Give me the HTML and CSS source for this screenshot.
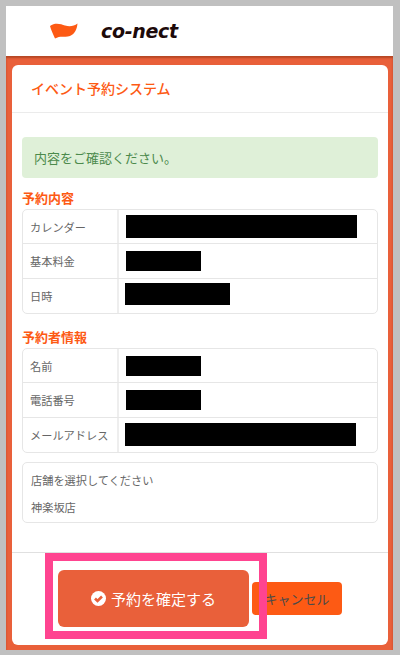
FILE: index.html
```html
<!DOCTYPE html>
<html lang="ja">
  <head>
    <meta charset="UTF-8" />
    <meta name="viewport" content="width=device-width, initial-scale=1.0" />
    <title>イベント予約システム</title>
    <link rel="stylesheet" href="styles.css">
  </head>
  <body>
    <div class="phone">
      <header class="site-header">
        <svg class="logo-flag" width="28" height="16" viewBox="0 0 28 16">
          <path d="M0 3C5 -1 11 1 15 2.500C20 4 24 3 27.500 0.500C27 6 25 11 20 13C15 15 11 12 5 15.500C3 11 1 7 0 3Z" fill="#fd5a14" />
        </svg>
        <span class="logo-text">co-nect</span>
      </header>
      <main class="page">
        <section class="card">
          <h1 class="card-title">イベント予約システム</h1>
          <div class="card-body">
            <div class="alert">内容をご確認ください。</div>

            <h2 class="section-title">予約内容</h2>
            <div class="info-table">
              <div class="info-row">
                <div class="info-label">カレンダー</div>
                <div class="info-value"><span class="redact redact-long"></span></div>
              </div>
              <div class="info-row">
                <div class="info-label">基本料金</div>
                <div class="info-value"><span class="redact redact-short"></span></div>
              </div>
              <div class="info-row">
                <div class="info-label">日時</div>
                <div class="info-value"><span class="redact redact-mid"></span></div>
              </div>
            </div>

            <h2 class="section-title section-title-second">予約者情報</h2>
            <div class="info-table">
              <div class="info-row">
                <div class="info-label">名前</div>
                <div class="info-value"><span class="redact redact-short"></span></div>
              </div>
              <div class="info-row">
                <div class="info-label">電話番号</div>
                <div class="info-value"><span class="redact redact-short"></span></div>
              </div>
              <div class="info-row">
                <div class="info-label">メールアドレス</div>
                <div class="info-value"><span class="redact redact-long redact-email"></span></div>
              </div>
            </div>

            <div class="shop-box">
              <div class="shop-line">店舗を選択してください</div>
              <div class="shop-line">神楽坂店</div>
            </div>
          </div>
          <div class="card-footer">
            <button class="btn-confirm" type="button">
              <svg width="15" height="15" viewBox="0 0 15 15">
                <circle cx="7.500" cy="7.500" r="7.500" fill="#fff" />
                <path d="M4 7.500L6.500 10L11 5.500" fill="none" stroke="#e9603a" stroke-width="2.600" />
              </svg>
              予約を確定する
            </button>
            <button class="btn-cancel" type="button">キャンセル</button>
            <div class="highlight"></div>
          </div>
        </section>
      </main>
    </div>
  </body>
</html>
```

FILE: styles.css
```css
* {
  box-sizing: border-box;
}
body {
  margin: 0;
  height: 655px;
  padding: 6px 7px 5px 6px;
  background: #c0c0c0;
  font-family: "Noto Sans CJK JP", "Noto Sans", sans-serif;
  overflow: hidden;
}
.phone {
  height: 644px;
  display: flex;
  flex-direction: column;
}
.site-header {
  height: 50px;
  flex: none;
  background: #fff;
  display: flex;
  align-items: center;
  padding: 0 0 1px 44px;
}
.logo-flag {
  flex: none;
}
.logo-text {
  margin-left: 23px;
  font-family: "DejaVu Sans", sans-serif;
  font-size: 19px;
  font-weight: 700;
  font-style: italic;
  letter-spacing: -0.3px;
  color: #1d0a0a;
}
.page {
  flex: 1;
  padding: 9px 5px 5px 6px;
  background: #e9603a;
  box-shadow: inset 0 2px 2px rgba(120, 40, 10, 0.45);
  display: flex;
}
.card {
  flex: 1;
  background: #fff;
  border-radius: 6px;
  display: flex;
  flex-direction: column;
}
.card-title {
  margin: 0;
  height: 48px;
  padding: 0 19px;
  border-bottom: 1px solid #ebebeb;
  font-size: 14px;
  font-weight: 500;
  line-height: 47px;
  color: #fd5a14;
}
.card-body {
  flex: 1;
  padding: 24px 10px 0;
}
.alert {
  height: 41px;
  padding: 0 12px;
  border-radius: 4px;
  background: #dff0d8;
  color: #4c8a4c;
  font-size: 13px;
  line-height: 41px;
}
.section-title {
  margin: 11px 0 3px;
  height: 17px;
  font-size: 13px;
  font-weight: 700;
  line-height: 17px;
  color: #fd5a14;
}
.section-title-second {
  margin-top: 14px;
}
.info-table {
  border: 1px solid #e6e6e6;
  border-radius: 5px;
}
.info-row {
  height: 34.330px;
  display: flex;
  border-bottom: 1px solid #e6e6e6;
}
.info-row:last-child {
  border-bottom: none;
}
.info-label {
  width: 96px;
  flex: none;
  padding-left: 7px;
  border-right: 2px solid #eeeeee;
  font-size: 11.200px;
  line-height: 34px;
  color: #666;
}
.info-value {
  flex: 1;
  padding-left: 7px;
  display: flex;
  align-items: center;
}
.redact {
  display: block;
  background: #000;
}
.redact-long {
  width: 231px;
  height: 23px;
}
.redact-short {
  width: 75px;
  height: 20px;
}
.redact-mid {
  width: 105px;
  height: 22px;
  margin: 0 0 4px -1px;
}
.redact-email {
  margin-left: -1px;
}
.shop-box {
  margin-top: 9px;
  height: 61px;
  padding: 4px 8px 0;
  border: 1px solid #e6e6e6;
  border-radius: 5px;
}
.shop-line {
  height: 27px;
  font-size: 11.200px;
  line-height: 27px;
  color: #666;
}
.card-footer {
  position: relative;
  height: 93px;
  flex: none;
  padding: 17px 0 0 46px;
  border-top: 1px solid #e0e0e0;
  display: flex;
  align-items: flex-start;
  gap: 3px;
}
.btn-confirm {
  width: 191px;
  height: 57px;
  padding: 0 0 1px;
  border: none;
  border-radius: 6px;
  background: #e9603a;
  color: #fff;
  font-family: inherit;
  font-size: 15px;
  display: flex;
  align-items: center;
  justify-content: center;
  gap: 5px;
}
.btn-cancel {
  width: 90px;
  height: 33px;
  margin-top: 12px;
  padding: 0;
  border: none;
  border-radius: 4px;
  background: #fd5a14;
  color: #4a4a4a;
  font-family: inherit;
  font-size: 13px;
}
.highlight {
  position: absolute;
  left: 33px;
  top: 0;
  width: 222px;
  height: 86px;
  border: 8px solid #ff4490;
  pointer-events: none;
}
```
